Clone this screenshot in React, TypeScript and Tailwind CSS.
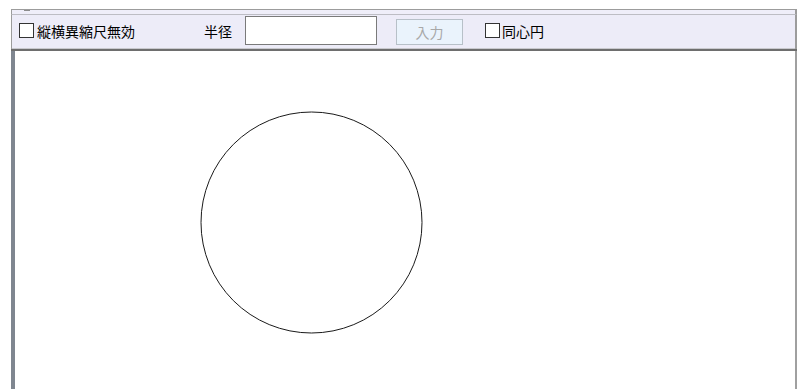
import { useState } from 'react';

const jp = { fontFamily: '"Noto Sans CJK JP", "Noto Sans", sans-serif' };

function Check({ label, checked, onToggle, gap }: { label: string; checked: boolean; onToggle: () => void; gap: string }) {
  return (
    <label className={`flex items-center ${gap} cursor-pointer select-none`} onClick={onToggle}>
      <span className="w-[15px] h-[15px] border border-[#333333] bg-white flex items-center justify-center text-[10px] leading-none">
        {checked ? '✓' : ''}
      </span>
      <span className="text-[14px] leading-[16px] text-black">{label}</span>
    </label>
  );
}

export default function App() {
  const [noAspect, setNoAspect] = useState(false);
  const [concentric, setConcentric] = useState(false);
  const [radius, setRadius] = useState('');

  return (
    <div className="w-[804px] h-[389px] bg-white overflow-hidden pt-[9px] pl-[11px]" style={jp}>
      <div className="w-[786px] h-full flex flex-col">
        {/* 上部ストリップ */}
        <div className="relative h-[5px] bg-[#efeef9] border-t border-l border-r-[2px] border-[#9c9c9c]">
          <span className="absolute left-[12px] top-0 w-[6px] h-[1px] bg-[#8c8c8c]" />
        </div>

        {/* ツールバー */}
        <div className="h-[37px] bg-[#edecf8] border-t border-[#bdbdc4] border-l border-r-[2px] border-l-[#9c9c9c] border-r-[#9c9c9c] flex items-start pl-[7px]">
          <div className="mt-[8px]">
            <Check label="縦横異縮尺無効" checked={noAspect} onToggle={() => setNoAspect(!noAspect)} gap="gap-[3px]" />
          </div>
          <span className="ml-[69px] mt-[8px] text-[14px] leading-[16px] text-black">半径</span>
          <input
            value={radius}
            onChange={(e) => setRadius(e.target.value)}
            className="ml-[13px] mt-[1px] w-[132px] h-[29px] border border-[#7a7a7a] bg-white px-1 text-[14px] outline-none"
          />
          <button
            type="button"
            disabled
            className="ml-[19px] mt-[4px] w-[67px] h-[26px] border border-[#b7c0c8] bg-[#eaf3fc] text-[14px] leading-none text-[#a8a8a8]"
          >
            入力
          </button>
          <div className="ml-[22px] mt-[8px]">
            <Check label="同心円" checked={concentric} onToggle={() => setConcentric(!concentric)} gap="gap-[2px]" />
          </div>
        </div>

        {/* 区切り線 */}
        <div className="h-[1px] bg-[#c9c9ce] border-l border-r-[2px] border-[#9c9c9c]" />
        <div className="h-[2px] bg-[#6e6e6e]" />

        {/* 描画キャンバス */}
        <div className="flex-1 bg-white border-l-[4px] border-l-[#7f8690] border-r-[2px] border-r-[#a0a0a0]">
          <svg width="770" height="338" className="block">
            <circle cx="296.5" cy="171.5" r="110.5" fill="none" stroke="#1a1a1a" strokeWidth="1" />
          </svg>
        </div>
      </div>
    </div>
  );
}
